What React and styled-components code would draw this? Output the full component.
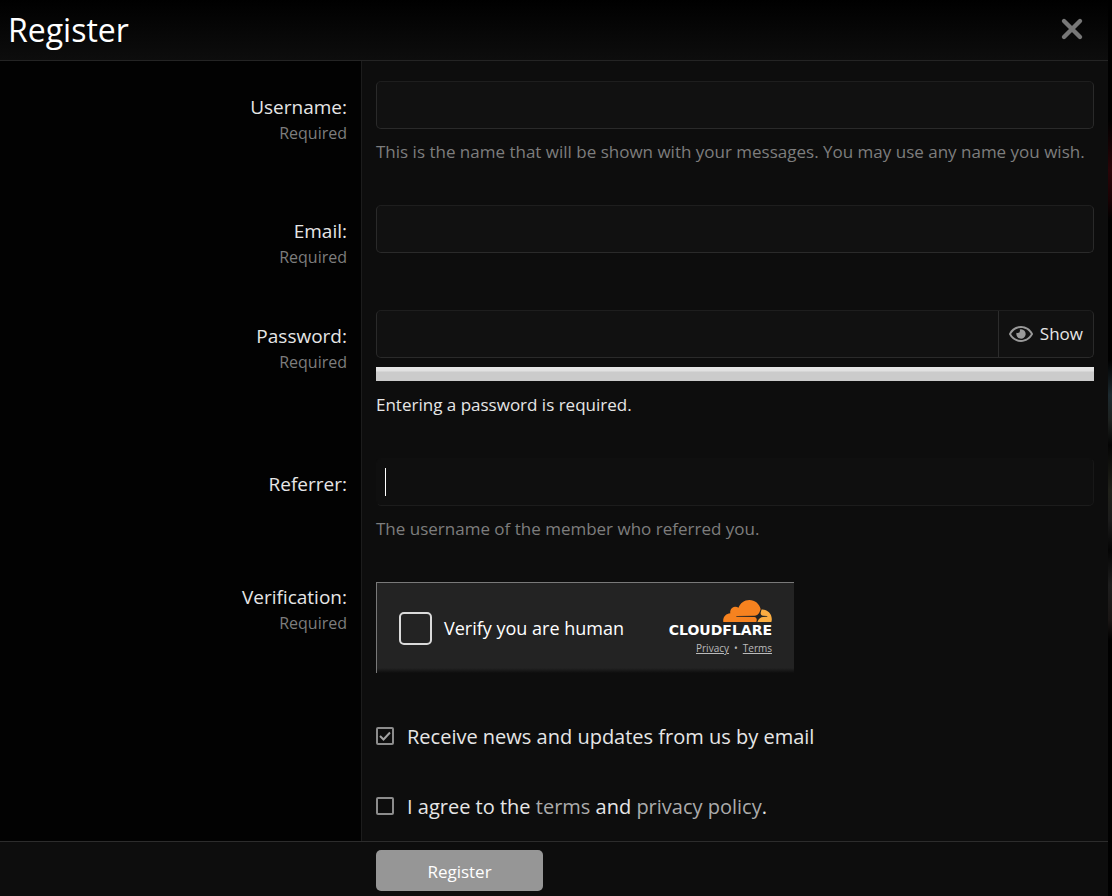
import { useState } from "react";
import styled, { createGlobalStyle } from "styled-components";
import { FaRegEye } from "react-icons/fa";

function App() {
  const [showPassword, setShowPassword] = useState(false);
  const [news, setNews] = useState(true);
  const [agree, setAgree] = useState(false);

  const handleSubmit = (e) => {
    e.preventDefault();
  };

  return (
    <Page>
      <GlobalStyle />
      <Dialog role="dialog" aria-labelledby="dialog-title">
        <Header>
          <Title id="dialog-title">Register</Title>
          <CloseButton type="button" aria-label="Close">
            <svg width="24" height="24" viewBox="0 0 24 24">
              <path
                d="M4 4L20 20M20 4L4 20"
                stroke="currentColor"
                strokeWidth="4.4"
                strokeLinecap="round"
              />
            </svg>
          </CloseButton>
        </Header>

        <Form onSubmit={handleSubmit}>
          <Row>
            <LabelCell>
              <Label htmlFor="username">Username:</Label>
              <Required>Required</Required>
            </LabelCell>
            <Field>
              <Input id="username" type="text" />
              <Hint>
                This is the name that will be shown with your messages. You may
                use any name you wish.
              </Hint>
            </Field>
          </Row>

          <Row>
            <LabelCell>
              <Label htmlFor="email">Email:</Label>
              <Required>Required</Required>
            </LabelCell>
            <Field>
              <Input id="email" type="email" />
            </Field>
          </Row>

          <Row>
            <LabelCell>
              <Label htmlFor="password">Password:</Label>
              <Required>Required</Required>
            </LabelCell>
            <Field>
              <InputGroup>
                <GroupInput
                  id="password"
                  type={showPassword ? "text" : "password"}
                />
                <ShowButton
                  type="button"
                  onClick={() => setShowPassword(!showPassword)}
                >
                  <FaRegEye size={24} />
                  {showPassword ? "Hide" : "Show"}
                </ShowButton>
              </InputGroup>
              <Meter />
              <Message>Entering a password is required.</Message>
            </Field>
          </Row>

          <Row>
            <LabelCell>
              <Label htmlFor="referrer">Referrer:</Label>
            </LabelCell>
            <Field>
              <Input id="referrer" type="text" $active />
              <Hint>The username of the member who referred you.</Hint>
            </Field>
          </Row>

          <Row>
            <LabelCell $flush>
              <Label htmlFor="human">Verification:</Label>
              <Required>Required</Required>
            </LabelCell>
            <Field>
              <Widget>
                <VerifyLabel>
                  <VerifyBox id="human" type="checkbox" />
                  Verify you are human
                </VerifyLabel>
                <Brand>
                  <CloudLogo />
                  <BrandName>CLOUDFLARE</BrandName>
                  <BrandLinks>
                    <a href="#privacy">Privacy</a>
                    <span>•</span>
                    <a href="#terms">Terms</a>
                  </BrandLinks>
                </Brand>
              </Widget>
            </Field>
          </Row>

          <Row>
            <LabelCell />
            <CheckField>
              <Check
                id="news"
                checked={news}
                onChange={(e) => setNews(e.target.checked)}
              />
              <CheckLabel htmlFor="news">
                Receive news and updates from us by email
              </CheckLabel>
            </CheckField>
          </Row>

          <Row>
            <LabelCell />
            <CheckField>
              <Check
                id="agree"
                checked={agree}
                onChange={(e) => setAgree(e.target.checked)}
              />
              <CheckLabel htmlFor="agree">
                I agree to the <TextLink href="#terms">terms</TextLink> and{" "}
                <TextLink href="#policy">privacy policy</TextLink>.
              </CheckLabel>
            </CheckField>
          </Row>

          <Footer>
            <Submit type="submit">Register</Submit>
          </Footer>
        </Form>
      </Dialog>
    </Page>
  );
}

export default App;

function Check(props) {
  return (
    <CheckWrap>
      <CheckInput type="checkbox" {...props} />
      <svg width="18" height="18" viewBox="0 0 18 18" fill="none">
        <path d="M4 9L7.5 12.5L14 5.5" stroke="#a3a3a3" strokeWidth="2" />
      </svg>
    </CheckWrap>
  );
}

function CloudLogo() {
  return (
    <svg width="49" height="22" viewBox="0 6.57 24 10.86">
      <path
        fill="#f6821f"
        d="M16.5088 16.8447c.1475-.5068.0908-.9707-.1553-1.3154-.2246-.3164-.6045-.499-1.0615-.5205l-8.6592-.1123a.1559.1559 0 0 1-.1333-.0713c-.0283-.042-.0351-.0986-.021-.1553.0278-.084.1123-.1484.2036-.1562l8.7359-.1123c1.0351-.0489 2.1601-.8868 2.5537-1.9136l.499-1.3013c.0215-.0561.0293-.1128.0147-.168-.5625-2.5463-2.835-4.4453-5.5499-4.4453-2.5039 0-4.6284 1.6177-5.3876 3.8614-.4927-.3658-1.1187-.5625-1.794-.499-1.2026.119-2.1665 1.083-2.2861 2.2856-.0283.31-.0069.6128.0635.894C1.5683 13.171 0 14.7754 0 16.752c0 .1748.0142.3515.0352.5273.0141.083.0844.1475.1689.1475h15.9814c.0909 0 .1758-.0645.2032-.1553z"
      />
      <path
        fill="#fbad41"
        d="M19.2656 11.2813c-.0771 0-.1611 0-.2383.0112-.0566 0-.1054.0415-.127.0976l-.3378 1.1744c-.1475.5068-.0918.9707.1543 1.3164.2256.3164.6055.498 1.0625.5195l1.8437.1133c.0557 0 .1055.0263.1329.0703.0283.043.0351.1074.0214.1562-.0283.084-.1132.1485-.204.1553l-1.921.1123c-1.041.0488-2.1582.8867-2.5527 1.914l-.1406.3585c-.0283.0713.0215.1416.0986.1416h6.5977c.0771 0 .1474-.0489.169-.126.1122-.4082.1757-.837.1757-1.2803 0-2.6025-2.125-4.727-4.7344-4.727"
      />
    </svg>
  );
}

const GlobalStyle = createGlobalStyle`
  * {
    box-sizing: border-box;
  }

  body {
    margin: 0;
    background: #000;
    color: #e6e6e6;
    font-family: "Open Sans", "Noto Sans", sans-serif;
    font-size: 20px;
    line-height: 28px;
  }

  input,
  button {
    font: inherit;
    color: inherit;
  }
`;

const Page = styled.div`
  min-height: 100vh;
  padding-right: 4px;
  background: linear-gradient(
    #000 0 120px,
    #2a0508 170px,
    #1a0204 200px,
    #000 220px 360px,
    #1c2a30 395px,
    #1e2220 420px,
    #050505 445px,
    #20211a 490px,
    #1c1c1c 520px,
    #050505 550px,
    #1e1e1e 585px,
    #1a1615 620px,
    #000 640px
  );
`;

const Dialog = styled.div`
  display: flex;
  flex-direction: column;
  min-height: 100vh;
  background: #0d0d0d;
`;

const Header = styled.header`
  display: flex;
  align-items: center;
  justify-content: space-between;
  height: 61px;
  padding: 0 24px 2px 8px;
  border-bottom: 1px solid #242424;
  background: linear-gradient(#000, #0d0d0d);
`;

const Title = styled.h1`
  margin: 0;
  padding-top: 2px;
  color: #fff;
  font-size: 32px;
  font-weight: 400;
  line-height: 40px;
`;

const CloseButton = styled.button`
  display: flex;
  padding: 0;
  border: none;
  background: none;
  color: #777;
  cursor: pointer;
`;

const Form = styled.form`
  display: flex;
  flex-direction: column;
`;

const Row = styled.div`
  display: flex;
`;

const LabelCell = styled.div`
  display: flex;
  flex: 0 0 362px;
  flex-direction: column;
  align-items: flex-end;
  padding: ${({ $flush }) => ($flush ? "21px" : "32px")} 14px 21px 8px;
  border-right: 1px solid #1c1c1c;
  background: #020202;
`;

const Label = styled.label`
  font-size: 19px;
  line-height: 28px;
`;

const Required = styled.span`
  color: #7d7d7d;
  font-size: 16px;
  line-height: 24px;
`;

const Field = styled.div`
  flex: 1;
  min-width: 0;
  padding: 20px 14px;
`;

const Input = styled.input`
  display: block;
  width: 100%;
  height: 48px;
  padding: 8px;
  border: 1px solid #2a2a2a;
  border-top-color: #1e1e1e;
  border-radius: 5px;
  outline: none;
  background: #111;

  ${({ $active }) =>
    $active &&
    `
    border-color: #0f0f0f #181818 #1c1c1c #0f0f0f;
    background: linear-gradient(#fff, #fff) 8px center / 1px 28px no-repeat #0f0f0f;
  `}
`;

const Hint = styled.div`
  margin-top: 10px;
  color: #7d7d7d;
  font-size: 17px;
  line-height: 26px;
`;

const InputGroup = styled.div`
  display: flex;
  height: 48px;
  margin-bottom: 9px;
  border: 1px solid #2a2a2a;
  border-top-color: #1e1e1e;
  border-radius: 5px;
  background: #111;
`;

const GroupInput = styled.input`
  flex: 1;
  min-width: 0;
  padding: 8px;
  border: none;
  outline: none;
  background: none;
`;

const ShowButton = styled.button`
  display: flex;
  align-items: center;
  gap: 7px;
  padding: 0 10px;
  border: none;
  border-left: 1px solid #2c2c2c;
  background: none;
  font-size: 17px;
  cursor: pointer;

  svg {
    color: #999;
  }
`;

const Meter = styled.div`
  height: 14px;
  background: linear-gradient(#e8e8e8, #e0e0e0 4px, #cbcbcb 5px);
`;

const Message = styled.div`
  margin-top: 11px;
  font-size: 17px;
  line-height: 26px;
`;

const Widget = styled.div`
  display: flex;
  align-items: center;
  justify-content: space-between;
  max-width: 418px;
  height: 91px;
  margin-bottom: 8px;
  padding: 0 22px;
  border-top: 1px solid #797979;
  border-left: 1px solid #797979;
  background: linear-gradient(#232323 85px, #0d0d0d);
`;

const VerifyLabel = styled.label`
  display: flex;
  align-items: center;
  gap: 12px;
  color: #fff;
  font-size: 18px;
`;

const VerifyBox = styled.input`
  width: 33px;
  height: 33px;
  margin: 0;
  border: 2px solid #dadada;
  border-radius: 5px;
  appearance: none;

  &:checked {
    background: #dadada;
  }
`;

const Brand = styled.div`
  display: flex;
  flex-direction: column;
  align-items: flex-end;
  padding-top: 2px;
`;

const BrandName = styled.div`
  color: #fff;
  font-family: "DejaVu Sans", sans-serif;
  font-size: 14px;
  font-weight: 700;
  line-height: 16px;
`;

const BrandLinks = styled.div`
  display: flex;
  gap: 5px;
  color: #bbb;
  font-size: 10px;
  line-height: 20px;

  a {
    color: inherit;
  }
`;

const CheckField = styled.div`
  display: flex;
  flex: 1;
  align-items: center;
  gap: 13px;
  min-width: 0;
  height: 70px;
  padding: 0 14px;
`;

const CheckLabel = styled.label`
  padding-top: 2px;
`;

const CheckWrap = styled.span`
  display: grid;
  width: 18px;
  height: 18px;

  > * {
    grid-area: 1 / 1;
  }

  svg {
    visibility: hidden;
    pointer-events: none;
  }

  input:checked + svg {
    visibility: visible;
  }
`;

const CheckInput = styled.input`
  width: 18px;
  height: 18px;
  margin: 0;
  border: 2px solid #8c8c8c;
  border-radius: 2px;
  appearance: none;
`;

const TextLink = styled.a`
  color: #ababab;
  text-decoration: none;
`;

const Footer = styled.footer`
  display: flex;
  padding: 8px 14px 4px 376px;
  border-top: 1px solid #2c2c2c;
`;

const Submit = styled.button`
  width: 167px;
  height: 41px;
  padding: 2px 0 0;
  border: none;
  border-radius: 5px;
  background: #969696;
  color: #fff;
  font-size: 17px;
  cursor: pointer;
`;
